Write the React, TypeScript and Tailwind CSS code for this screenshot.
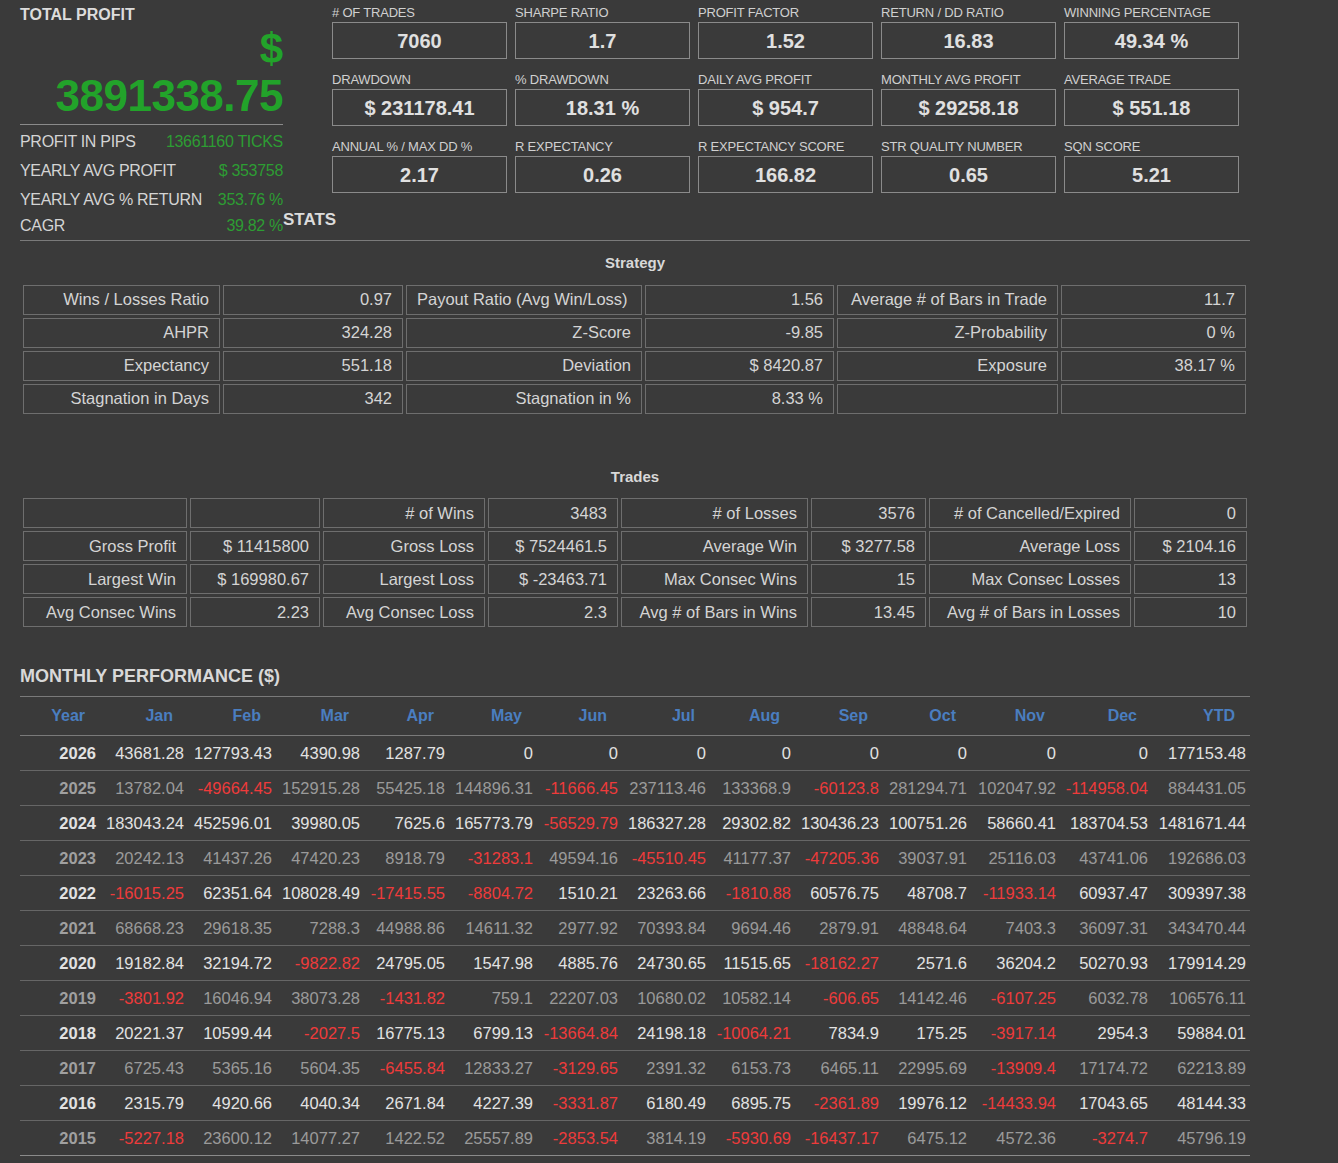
import React from "react";

const F = { fontFamily: '"Liberation Sans", Arial, sans-serif' };

const kpis: [string, string][] = [
  ["# OF TRADES", "7060"], ["SHARPE RATIO", "1.7"], ["PROFIT FACTOR", "1.52"], ["RETURN / DD RATIO", "16.83"], ["WINNING PERCENTAGE", "49.34 %"],
  ["DRAWDOWN", "$ 231178.41"], ["% DRAWDOWN", "18.31 %"], ["DAILY AVG PROFIT", "$ 954.7"], ["MONTHLY AVG PROFIT", "$ 29258.18"], ["AVERAGE TRADE", "$ 551.18"],
  ["ANNUAL % / MAX DD %", "2.17"], ["R EXPECTANCY", "0.26"], ["R EXPECTANCY SCORE", "166.82"], ["STR QUALITY NUMBER", "0.65"], ["SQN SCORE", "5.21"],
];

const strategy: string[][] = [
  ["Wins / Losses Ratio", "0.97", "Payout Ratio (Avg Win/Loss)", "1.56", "Average # of Bars in Trade", "11.7"],
  ["AHPR", "324.28", "Z-Score", "-9.85", "Z-Probability", "0 %"],
  ["Expectancy", "551.18", "Deviation", "$ 8420.87", "Exposure", "38.17 %"],
  ["Stagnation in Days", "342", "Stagnation in %", "8.33 %", "", ""],
];

const trades: string[][] = [
  ["", "", "# of Wins", "3483", "# of Losses", "3576", "# of Cancelled/Expired", "0"],
  ["Gross Profit", "$ 11415800", "Gross Loss", "$ 7524461.5", "Average Win", "$ 3277.58", "Average Loss", "$ 2104.16"],
  ["Largest Win", "$ 169980.67", "Largest Loss", "$ -23463.71", "Max Consec Wins", "15", "Max Consec Losses", "13"],
  ["Avg Consec Wins", "2.23", "Avg Consec Loss", "2.3", "Avg # of Bars in Wins", "13.45", "Avg # of Bars in Losses", "10"],
];

const months = ["Year", "Jan", "Feb", "Mar", "Apr", "May", "Jun", "Jul", "Aug", "Sep", "Oct", "Nov", "Dec", "YTD"];
const colW = [80, 88, 88, 88, 85, 88, 85, 88, 85, 88, 88, 89, 92, 98];

const monthly: string[][] = [
  ["2026", "43681.28", "127793.43", "4390.98", "1287.79", "0", "0", "0", "0", "0", "0", "0", "0", "177153.48"],
  ["2025", "13782.04", "-49664.45", "152915.28", "55425.18", "144896.31", "-11666.45", "237113.46", "133368.9", "-60123.8", "281294.71", "102047.92", "-114958.04", "884431.05"],
  ["2024", "183043.24", "452596.01", "39980.05", "7625.6", "165773.79", "-56529.79", "186327.28", "29302.82", "130436.23", "100751.26", "58660.41", "183704.53", "1481671.44"],
  ["2023", "20242.13", "41437.26", "47420.23", "8918.79", "-31283.1", "49594.16", "-45510.45", "41177.37", "-47205.36", "39037.91", "25116.03", "43741.06", "192686.03"],
  ["2022", "-16015.25", "62351.64", "108028.49", "-17415.55", "-8804.72", "1510.21", "23263.66", "-1810.88", "60576.75", "48708.7", "-11933.14", "60937.47", "309397.38"],
  ["2021", "68668.23", "29618.35", "7288.3", "44988.86", "14611.32", "2977.92", "70393.84", "9694.46", "2879.91", "48848.64", "7403.3", "36097.31", "343470.44"],
  ["2020", "19182.84", "32194.72", "-9822.82", "24795.05", "1547.98", "4885.76", "24730.65", "11515.65", "-18162.27", "2571.6", "36204.2", "50270.93", "179914.29"],
  ["2019", "-3801.92", "16046.94", "38073.28", "-1431.82", "759.1", "22207.03", "10680.02", "10582.14", "-606.65", "14142.46", "-6107.25", "6032.78", "106576.11"],
  ["2018", "20221.37", "10599.44", "-2027.5", "16775.13", "6799.13", "-13664.84", "24198.18", "-10064.21", "7834.9", "175.25", "-3917.14", "2954.3", "59884.01"],
  ["2017", "6725.43", "5365.16", "5604.35", "-6455.84", "12833.27", "-3129.65", "2391.32", "6153.73", "6465.11", "22995.69", "-13909.4", "17174.72", "62213.89"],
  ["2016", "2315.79", "4920.66", "4040.34", "2671.84", "4227.39", "-3331.87", "6180.49", "6895.75", "-2361.89", "19976.12", "-14433.94", "17043.65", "48144.33"],
  ["2015", "-5227.18", "23600.12", "14077.27", "1422.52", "25557.89", "-2853.54", "3814.19", "-5930.69", "-16437.17", "6475.12", "4572.36", "-3274.7", "45796.19"],
];

const sideRows: [string, string][] = [
  ["PROFIT IN PIPS", "13661160 TICKS"],
  ["YEARLY AVG PROFIT", "$ 353758"],
  ["YEARLY AVG % RETURN", "353.76 %"],
  ["CAGR", "39.82 %"],
];

const stratCols = "grid-cols-[197px_180px_236px_189px_221px_185px]";
const tradeCols = "grid-cols-[164px_130px_162px_130px_187px_115px_202px_113px]";

function Cell({ t, left }: { t: string; left?: boolean }) {
  return (
    <div className={`h-[30px] border border-[#6e6e6e] flex items-center px-[10px] text-[16.5px] whitespace-nowrap overflow-hidden text-[#d4d4d4] ${left ? "justify-start" : "justify-end"}`}>
      {t}
    </div>
  );
}

export default function App() {
  return (
    <div style={F} className="bg-[#3a3a3a] min-h-[1163px] w-[1338px] text-[#d8d8d8] pl-[20px] pt-[6px]">
      <div className="flex">
        <div className="w-[263px] flex flex-col">
          <div className="text-[16px] font-bold text-[#dcdcdc] leading-[18px]">TOTAL PROFIT</div>
          <div className="text-right text-[#22a32a] font-bold text-[42px] leading-[40px] mt-[5px]">$</div>
          <div className="text-right text-[#22a32a] font-bold text-[44px] leading-[46px] mt-[4px] tracking-[-0.5px]">3891338.75</div>
          <div className="border-t border-[#8a8a8a] mt-[5px]" />
          <div className="pt-[2px]">
            {sideRows.map(([a, b], i) => (
              <div key={a} className={`flex justify-between items-center text-[16px] ${i === 3 ? "h-[24px] items-end" : "h-[29px]"}`}>
                <span className="text-[#d4d4d4] tracking-[-0.3px]">{a}</span>
                <span className="text-[#2d9d33] tracking-[-0.3px]">{b}</span>
              </div>
            ))}
          </div>
        </div>
        <div className="flex flex-col">
          <div className="ml-[49px] grid grid-cols-[175px_175px_175px_175px_175px] gap-x-[8px] gap-y-[14px]">
            {kpis.map(([l, v]) => (
              <div key={l}>
                <div className="text-[13px] leading-[14px] text-[#d0d0d0] tracking-[-0.2px]">{l}</div>
                <div className="mt-[2px] h-[37px] border border-[#8a8a8a] flex items-center justify-center font-bold text-[20px] text-[#e0e0e0]">{v}</div>
              </div>
            ))}
          </div>
          <div className="mt-auto font-bold text-[17px] text-[#dcdcdc] leading-[20px] mb-[8px]">STATS</div>
        </div>
      </div>
      <div className="w-[1230px] border-t border-[#7a7a7a] mt-[2px]" />

      <div className="w-[1230px] text-center font-bold text-[15px] mt-[11px] text-[#d8d8d8]">Strategy</div>
      <div className={`ml-[3px] mt-[10px] grid ${stratCols} gap-[3px] w-[1224px]`}>
        {strategy.flatMap((r, ri) => r.map((t, ci) => <Cell key={ri + "-" + ci} t={t} left={ci === 2 && ri === 0} />))}
      </div>

      <div className="w-[1230px] text-center font-bold text-[15px] mt-[52px] text-[#d8d8d8]">Trades</div>
      <div className={`ml-[3px] mt-[10px] grid ${tradeCols} gap-[3px] w-[1224px]`}>
        {trades.flatMap((r, ri) => r.map((t, ci) => <Cell key={ri + "-" + ci} t={t} />))}
      </div>

      <div className="font-bold text-[18px] text-[#d8d8d8] mt-[38px] leading-[22px]">MONTHLY PERFORMANCE ($)</div>
      <table className="mt-[9px] w-[1230px] border-collapse table-fixed">
        <colgroup>
          {colW.map((w, i) => <col key={i} style={{ width: w }} />)}
        </colgroup>
        <thead>
          <tr className="border-t border-[#7a7a7a] border-b border-b-[#7a7a7a] h-[39px]">
            {months.map((m) => (
              <th key={m} className="text-right pr-[15px] text-[16px] font-bold text-[#4a7ec0]">{m}</th>
            ))}
          </tr>
        </thead>
        <tbody>
          {monthly.map((r, ri) => {
            const bold = ri % 2 === 0;
            return (
              <tr key={r[0]} className={`h-[35px] border-b ${ri === monthly.length - 1 ? "border-[#8a8a8a]" : "border-[#666]"}`}>
                {r.map((v, ci) => (
                  <td key={ci} className={`text-right pr-[4px] text-[16.5px] whitespace-nowrap ${ci === 0 ? "font-bold" : ""} ${
                    v.startsWith("-") ? "text-[#ee3b3b]" : bold ? "text-[#e2e2e2]" : "text-[#9a9a9a]"
                  } ${ci === 0 ? (bold ? "text-[#e2e2e2]" : "text-[#a0a0a0]") : ""}`}>
                    {v}
                  </td>
                ))}
              </tr>
            );
          })}
        </tbody>
      </table>
    </div>
  );
}
